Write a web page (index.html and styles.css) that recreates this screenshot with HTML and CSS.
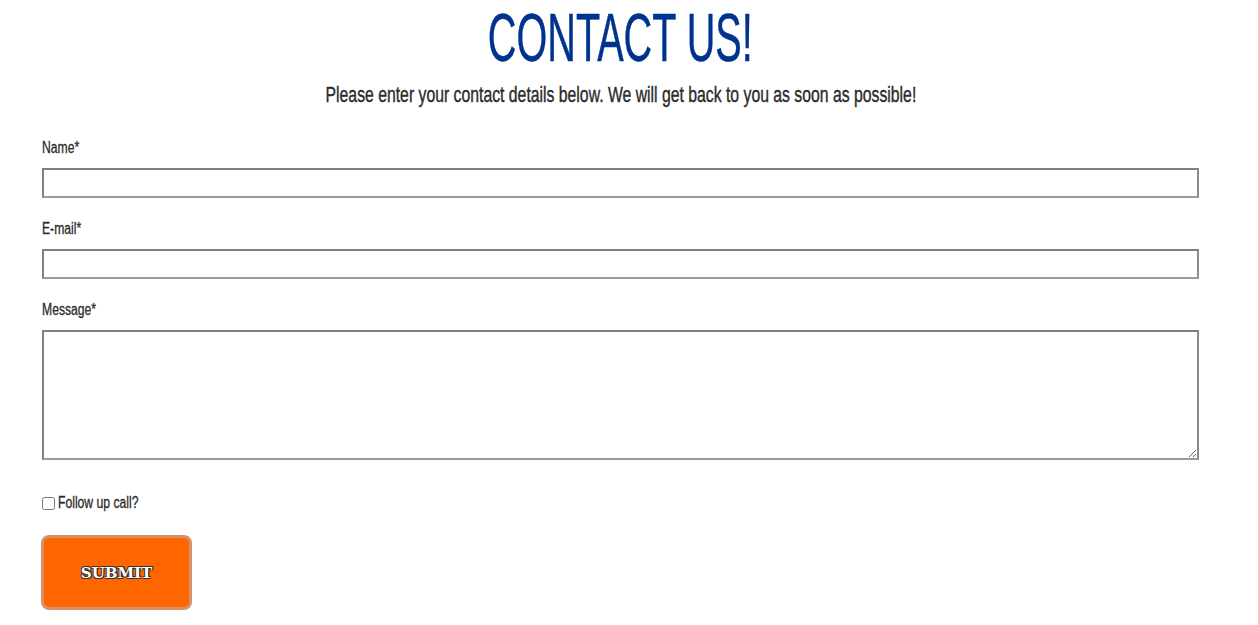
FILE: index.html
```html
<!DOCTYPE html>
<html>
<head>
<meta charset="utf-8">
<link rel="stylesheet" href="styles.css">
</head>
<body>
<div class="page">
  <header class="intro">
    <h1 class="title"><span class="title-text">CONTACT US!</span></h1>
    <p class="lead"><span class="lead-text">Please enter your contact details below. We will get back to you as soon as possible!</span></p>
  </header>
  <form class="form">
    <label class="label" for="name"><span class="narrow">Name*</span></label>
    <input class="field" id="name" type="text">
    <label class="label" for="email"><span class="narrow">E-mail*</span></label>
    <input class="field" id="email" type="text">
    <label class="label" for="msg"><span class="narrow">Message*</span></label>
    <textarea class="field area" id="msg"></textarea>
    <label class="check"><input type="checkbox" class="box"><span class="narrow">Follow up call?</span></label>
    <button type="button" class="submit">SUBMIT</button>
  </form>
</div>
</body>
</html>
```
FILE: styles.css
```css
html, body { margin: 0; padding: 0; background: #fff; }
body { font-family: "Liberation Sans", Arial, sans-serif; color: #2b2b2b; }
.page { width: 1241px; }
.intro { text-align: center; }
.title { margin: 0; padding-top: 2px; font-weight: 400; font-size: 68px; line-height: 70px; color: #00338d; -webkit-text-stroke: 0.5px #00338d; }
.title-text { display: inline-block; transform: scaleX(0.583); }
.lead { margin: 10px 0 0; font-size: 22px; line-height: 26px; white-space: nowrap; -webkit-text-stroke: 0.4px #2b2b2b; }
.lead-text { display: inline-block; transform: scaleX(0.717); }
.form { display: flex; flex-direction: column; align-items: flex-start; padding: 0 42px 0 41px; margin-top: 31px; }
.label { font-size: 16px; line-height: 18px; margin-bottom: 11px; padding-left: 1px; -webkit-text-stroke: 0.3px #2b2b2b; }
.narrow { display: inline-block; transform: scaleX(0.76); transform-origin: left center; white-space: nowrap; }
.field { box-sizing: border-box; width: calc(100% - 1px); margin-left: 1px; height: 30px; margin-bottom: 22px; border: 2px solid; border-color: #7e7e86 #8a8a92 #9a9aa2 #7e7e86; background: #fff; font: inherit; }
.area { height: 130px; margin-bottom: 34px; resize: vertical; }
.check { display: flex; align-items: center; padding-left: 1px; font-size: 16px; line-height: 18px; -webkit-text-stroke: 0.3px #2b2b2b; }
.box { margin: 0 3px 0 0; width: 13px; height: 13px; }
.submit { margin-top: 23px; width: 151px; height: 75px; background: #ff6600; border: 3px solid #d4916a; border-radius: 8px; color: #fff; font-family: "DejaVu Serif", serif; font-weight: 700; font-size: 15px; text-shadow: 1px 1px 0 #333, -1px -1px 0 #333, 1px -1px 0 #333, -1px 1px 0 #333; }
```
